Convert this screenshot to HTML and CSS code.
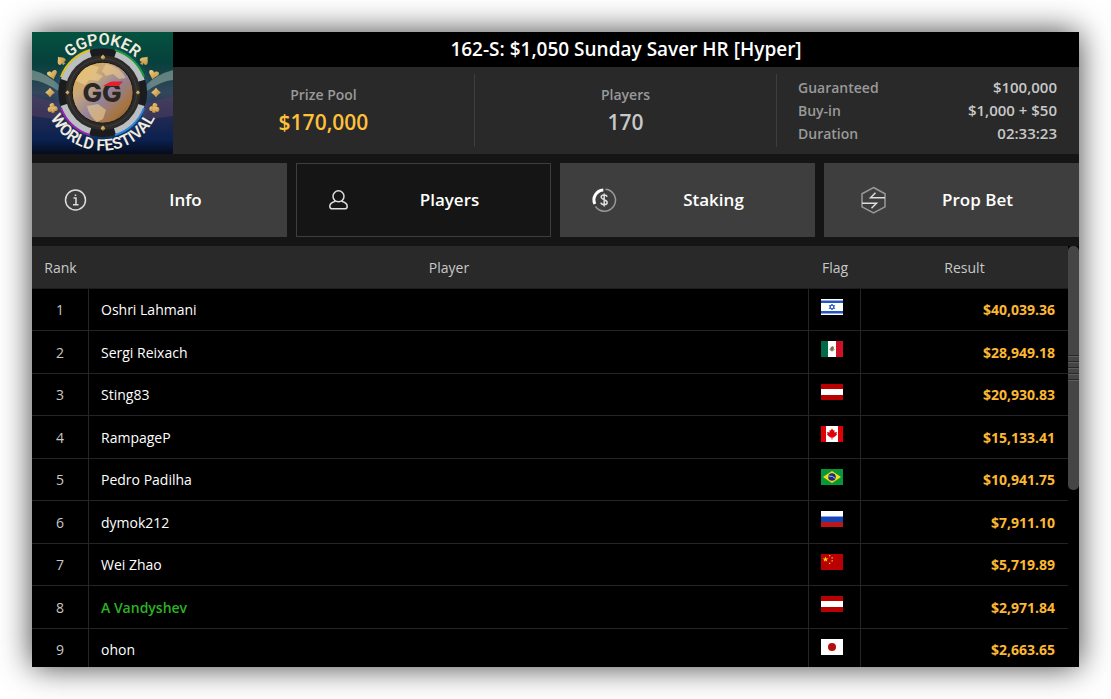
FILE: index.html
```html
<!DOCTYPE html>
<html lang="en">
<head>
  <meta charset="UTF-8" />
  <meta name="viewport" content="width=device-width, initial-scale=1.0" />
  <title>162-S: $1,050 Sunday Saver HR [Hyper]</title>
  <link rel="stylesheet" href="styles.css">
</head>
<body>
  <main class="lobby">
    <header class="header">
      <svg class="logo" viewBox="0 0 141 122" role="img" aria-label="GGPoker World Festival">
        <defs>
          <linearGradient id="sky" x1="0" y1="0" x2="0" y2="1">
            <stop offset="0" stop-color="#04523f" />
            <stop offset="0.25" stop-color="#07403c" />
            <stop offset="0.5" stop-color="#33475c" />
            <stop offset="0.65" stop-color="#252c52" />
            <stop offset="0.88" stop-color="#0b2150" />
            <stop offset="1" stop-color="#050b1c" />
          </linearGradient>
          <radialGradient id="light">
            <stop offset="0" stop-color="#dfe8d8" />
            <stop offset="1" stop-color="#6f8f88" stop-opacity="0" />
          </radialGradient>
          <radialGradient id="haze">
            <stop offset="0" stop-color="#3b8fc4" stop-opacity="0.9" />
            <stop offset="0.8" stop-color="#1a6a94" stop-opacity="0.5" />
            <stop offset="1" stop-color="#1a6a94" stop-opacity="0" />
          </radialGradient>
          <linearGradient id="globe" x1="0" y1="0" x2="1" y2="1">
            <stop offset="0" stop-color="#e0a63e" />
            <stop offset="0.3" stop-color="#c9a878" />
            <stop offset="0.55" stop-color="#94839c" />
            <stop offset="0.8" stop-color="#a8743c" />
            <stop offset="1" stop-color="#3c3a63" />
          </linearGradient>
          <linearGradient id="gold" x1="0" y1="0" x2="1" y2="1">
            <stop offset="0" stop-color="#f3d587" />
            <stop offset="1" stop-color="#b98533" />
          </linearGradient>
          <path id="arcTop" d="M22.700 60.700a48 48 0 0 1 96 0" />
          <path id="arcBottom" d="M12.700 60.700a58 58 0 0 0 116 0" />
          <path id="spade" d="M0-4.500C1-2.500 4-1 4 1.200 4 3 1.800 3.400.7 2.200L1.500 4.500H-1.500L-.7 2.200C-1.800 3.400-4 3-4 1.200-4-1-1-2.500 0-4.500z" />
          <path id="heart" d="M0 4.500C-1 2-4.800 0-4.800-2.200-4.800-4.800-1-4.800 0-2.300 1-4.800 4.800-4.800 4.800-2.200 4.800 0 1 2 0 4.500z" />
          <path id="diamond" d="M0-4.800Q2-2 4.800 0 2 2 0 4.800-2 2-4.800 0-2-2 0-4.800z" />
          <g id="club"><circle cy="-2.400" r="2.300" /><circle cx="-2.500" cy="1" r="2.300" /><circle cx="2.500" cy="1" r="2.300" /><path d="M-.8-1H.8L1.600 4.500H-1.600z" /></g>
        </defs>
        <rect width="141" height="122" fill="url(#sky)" />
        <path d="M0 38q16 4 28 16l-2 5Q12 49 0 48zM141 38q-16 4-28 16l2 5q14-10 26-11z" fill="#a9bfb4" opacity="0.5" />
        <path d="M0 64l30 8v16L0 84zM141 64l-30 8v16l30-4z" fill="#4e3e60" opacity="0.6" />
        <circle cx="70.700" cy="60.700" r="50" fill="url(#haze)" />
        <circle cx="70.700" cy="60.700" r="44.500" fill="#1c1c1e" />
        <!-- chip rim: light segments with coloured edges -->
        <circle cx="70.700" cy="60.700" r="40" fill="none" stroke="#bcbfc2" stroke-width="8" stroke-dasharray="38 24.830" stroke-dashoffset="-12.400" />
        <g fill="none" stroke-width="2">
          <path d="M29 45A44.500 44.500 0 0 1 58 18" stroke="#e2c51f" />
          <path d="M83 18a44.500 44.500 0 0 1 29 27" stroke="#1f9a35" />
          <path d="M29 76a44.500 44.500 0 0 0 29 27" stroke="#9a25b0" />
          <path d="M83 103a44.500 44.500 0 0 0 29-27" stroke="#2c83d8" />
        </g>
        <circle cx="70.700" cy="60.700" r="37.500" fill="#2c2b2a" />
        <circle cx="70.700" cy="60.700" r="34" fill="none" stroke="#403d39" stroke-width="1" />
        <circle cx="70.700" cy="60.700" r="30.500" fill="url(#globe)" stroke="#18130d" />
        <path d="M44 49q4-12 15-16l8 2-3 6 7 3-5 5-9-1-4 5zM74 32q13 2 20 14l-7 1-6-5-7 2-4-5zM55 74l11-2 8 6-3 9-6 3q-8-6-10-16z" fill="#f0cf8b" opacity="0.6" />
        <text class="logo-mark" x="70" y="70" text-anchor="middle">GG</text>
        <path d="M71 54l7-4q1-.6 3-.6h10l-4 4.600z" fill="#e3212c" />
        <g fill="url(#gold)">
          <use href="#spade" transform="translate(29 28.500) rotate(-40) scale(1.100)" />
          <use href="#heart" transform="translate(20.500 43) rotate(-15) scale(1.050)" />
          <use href="#diamond" transform="translate(18 60.500)" />
          <use href="#club" transform="translate(20.500 76) rotate(-10) scale(1.050)" />
          <use href="#spade" transform="translate(112.500 28.500) rotate(40) scale(1.100)" />
          <use href="#heart" transform="translate(121.500 43) rotate(15) scale(1.050)" />
          <use href="#diamond" transform="translate(124 60.500)" />
          <use href="#club" transform="translate(122.500 76) rotate(10) scale(1.050)" />
          <use href="#spade" transform="translate(71 25) scale(.55)" />
          <use href="#spade" transform="translate(71 96) scale(.55)" />
          <use href="#diamond" transform="translate(35.500 60.500) scale(.45)" />
          <use href="#diamond" transform="translate(106 60.500) scale(.45)" />
        </g>
        <text class="logo-text"><textPath href="#arcTop" startOffset="50%" text-anchor="middle">GGPOKER</textPath></text>
        <text class="logo-text"><textPath href="#arcBottom" startOffset="50%" text-anchor="middle">WORLD FESTIVAL</textPath></text>
      </svg>
      <div class="summary">
        <h1 class="title">162-S: $1,050 Sunday Saver HR [Hyper]</h1>
        <div class="stats">
          <div class="stat">
            <span class="stat-label">Prize Pool</span>
            <strong class="stat-value gold">$170,000</strong>
          </div>
          <div class="stat">
            <span class="stat-label">Players</span>
            <strong class="stat-value">170</strong>
          </div>
          <dl class="details">
            <dt>Guaranteed</dt><dd>$100,000</dd>
            <dt>Buy-in</dt><dd>$1,000 + $50</dd>
            <dt>Duration</dt><dd>02:33:23</dd>
          </dl>
        </div>
      </div>
    </header>

    <nav class="tabs">
      <button class="tab" type="button">
        <svg class="tab-icon" viewBox="0 0 36 28" aria-hidden="true">
          <circle cx="13.500" cy="14" r="10" />
          <path d="M11.500 12h2.500v6.500M11 18.700h5.500M13.500 8.500v1.600" />
        </svg>
        <span class="tab-label">Info</span>
      </button>
      <button class="tab active" type="button" aria-current="page">
        <svg class="tab-icon" viewBox="0 0 36 28" aria-hidden="true">
          <circle cx="12.500" cy="10.300" r="5.500" />
          <path d="M9.500 15.300C7 16 3.800 17 3.800 20.200c0 1.800 1 2.600 2.500 2.600h12.400c1.500 0 2.500-.8 2.500-2.600 0-3.200-3.200-4.200-5.700-4.900" />
        </svg>
        <span class="tab-label">Players</span>
      </button>
      <button class="tab" type="button">
        <svg class="tab-icon" viewBox="0 0 36 28" aria-hidden="true">
          <path class="thick" d="M4.800 18A10 10 0 0 1 13.300 4" />
          <path class="thin" d="M15.500 3.200A11 11 0 1 1 5.500 20.500" />
          <path d="M17 10.800c-.5-2.300-5.800-2.500-5.800.3 0 3 6 2.200 6 5.300 0 3-5.800 2.800-6.300.2M14.200 7.500v13" />
        </svg>
        <span class="tab-label">Staking</span>
      </button>
      <button class="tab" type="button">
        <svg class="tab-icon" viewBox="0 0 36 28" aria-hidden="true">
          <path class="thin" d="M19.500 1.500L31 7.800v13L19.500 27 8 20.800v-13z" />
          <path d="M31 11.700H16.500l5-5M8 17.300h14.500l-5 5" />
        </svg>
        <span class="tab-label">Prop Bet</span>
      </button>
    </nav>

    <section class="results">
      <div class="table-wrap">
        <table class="table">
          <thead>
            <tr><th class="rank">Rank</th><th>Player</th><th class="flag">Flag</th><th class="result">Result</th></tr>
          </thead>
          <tbody>
            <tr>
              <td class="rank">1</td><td>Oshri Lahmani</td>
              <td class="flag"><svg viewBox="0 0 22 16" role="img" aria-label="Israel"><path fill="#fff" d="M0 0h22v16H0z" /><path fill="#2455c3" d="M0 1.500h22v2.500H0zM0 12h22v2.500H0z" /><path fill="none" stroke="#3765cb" d="M11 5l2.700 4.500H8.300zM11 11L8.300 6.500h5.400z" /></svg></td>
              <td class="result">$40,039.36</td>
            </tr>
            <tr>
              <td class="rank">2</td><td>Sergi Reixach</td>
              <td class="flag"><svg viewBox="0 0 22 16" role="img" aria-label="Mexico"><path fill="#fff" d="M0 0h22v16H0z" /><path fill="#006b46" d="M0 0h7v16H0z" /><path fill="#d01027" d="M15 0h7v16h-7z" /><path fill="#8b6b3d" d="M10 6l2-1 1 2-1 3-2 0-1-2z" /><path fill="none" stroke="#78a17b" d="M8.500 8q2.500 4 5 0" /></svg></td>
              <td class="result">$28,949.18</td>
            </tr>
            <tr>
              <td class="rank">3</td><td>Sting83</td>
              <td class="flag"><svg viewBox="0 0 22 16" role="img" aria-label="Austria"><path fill="#b90000" d="M0 0h22v16H0z" /><path fill="#fff" d="M0 5h22v6H0z" /></svg></td>
              <td class="result">$20,930.83</td>
            </tr>
            <tr>
              <td class="rank">4</td><td>RampageP</td>
              <td class="flag"><svg viewBox="0 0 22 16" role="img" aria-label="Canada"><path fill="#fff" d="M0 0h22v16H0z" /><path fill="#df0008" d="M0 0h5v16H0zM17 0h5v16h-5zM11 2.500l1.300 2 1.200-.5-.2 2.500 2.700-.5-.6 2 .6.700-3.500 2.800H11.400V13.500H10.600V11.500H9.500L6 8.700l.6-.7-.6-2 2.700.5L8.500 4l1.200.5z" /></svg></td>
              <td class="result">$15,133.41</td>
            </tr>
            <tr>
              <td class="rank">5</td><td>Pedro Padilha</td>
              <td class="flag"><svg viewBox="0 0 22 16" role="img" aria-label="Brazil"><path fill="#079638" d="M0 0h22v16H0z" /><path fill="#f5df12" d="M11 2l9 6-9 6-9-6z" /><circle cx="11" cy="8" r="3.800" fill="#1b2c7c" /><path fill="none" stroke="#a9bdd4" d="M7.500 7q4-.5 7 2.500" /></svg></td>
              <td class="result">$10,941.75</td>
            </tr>
            <tr>
              <td class="rank">6</td><td>dymok212</td>
              <td class="flag"><svg viewBox="0 0 22 16" role="img" aria-label="Russia"><path fill="#fff" d="M0 0h22v6H0z" /><path fill="#1546b5" d="M0 5.500h22V11H0z" /><path fill="#bd1717" d="M0 11h22v5H0z" /></svg></td>
              <td class="result">$7,911.10</td>
            </tr>
            <tr>
              <td class="rank">7</td><td>Wei Zhao</td>
              <td class="flag"><svg viewBox="0 0 22 16" role="img" aria-label="China"><path fill="#ba0000" d="M0 0h22v16H0z" /><path fill="#ffd800" d="M4.500 2.500l.7 2h2.200L5.700 5.800l.6 2-1.800-1.200-1.800 1.200.6-2L1.600 4.500h2.200zM8 1h1.300v1.300H8zM10.500 3.200h1.300v1.300h-1.300zM10.500 6.200h1.300v1.300h-1.300zM8 8.700h1.300V10H8z" /></svg></td>
              <td class="result">$5,719.89</td>
            </tr>
            <tr class="highlight">
              <td class="rank">8</td><td>A Vandyshev</td>
              <td class="flag"><svg viewBox="0 0 22 16" role="img" aria-label="Austria"><path fill="#b90000" d="M0 0h22v16H0z" /><path fill="#fff" d="M0 5h22v6H0z" /></svg></td>
              <td class="result">$2,971.84</td>
            </tr>
            <tr>
              <td class="rank">9</td><td>ohon</td>
              <td class="flag"><svg viewBox="0 0 22 16" role="img" aria-label="Japan"><path fill="#fff" d="M0 0h22v16H0z" /><circle cx="11" cy="8" r="4" fill="#b50d0d" /></svg></td>
              <td class="result">$2,663.65</td>
            </tr>
          </tbody>
        </table>
      </div>
      <div class="scrollbar"><div class="thumb"><div class="grip"></div></div></div>
    </section>
  </main>
</body>
</html>
```

FILE: styles.css
```css
* {
  box-sizing: border-box;
}

body {
  margin: 0;
  padding: 32px;
  height: 100vh;
  background: #fff;
  font-family: 'Open Sans', sans-serif;
  font-size: 14px;
  color: #c8c8c8;
}

.lobby {
  display: flex;
  flex-direction: column;
  gap: 9px;
  height: 100%;
  background: #151515;
  box-shadow: 0 0 30px rgba(0, 0, 0, 0.75);
}

/* header */
.header {
  display: flex;
  background: #292929;
}

.logo {
  display: block;
  flex: none;
  width: 141px;
  height: 122px;
  overflow: visible;
}

.logo-text {
  font-family: Roboto, sans-serif;
  font-size: 16px;
  font-weight: 600;
  fill: #f1ecdf;
}

.logo-mark {
  font-family: Inter, sans-serif;
  font-size: 26px;
  font-weight: 800;
  fill: #2b2724;
}

.summary {
  display: flex;
  flex-direction: column;
  flex: 1;
}

.title {
  margin: 0;
  background: #000;
  color: #fff;
  font-size: 19px;
  font-weight: 600;
  line-height: 35px;
  text-align: center;
}

.stats {
  display: grid;
  grid-template-columns: repeat(3, 1fr);
  flex: 1;
  padding: 7px 0;
}

.stat {
  display: flex;
  flex-direction: column;
  align-items: center;
  padding-top: 12px;
  border-right: 1px solid #3d3d3d;
  font-weight: 600;
}

.stat-label {
  line-height: 18px;
  color: #999;
}

.stat-value {
  line-height: 36px;
  font-size: 21px;
  font-weight: 600;
}

.gold {
  color: #ffc13b;
}

.details {
  display: grid;
  grid-template-columns: auto auto;
  align-content: start;
  margin: 0;
  padding: 2px 22px 2px 21px;
  font-weight: 600;
  line-height: 23px;
}

.details dt {
  color: #999;
}

.details dd {
  margin: 0;
  font-size: 15px;
  text-align: right;
}

/* tabs */
.tabs {
  display: grid;
  grid-template-columns: repeat(4, 1fr);
  gap: 9px;
}

.tab {
  display: flex;
  align-items: center;
  height: 74px;
  padding: 0 13px 0 29px;
  border: 1px solid #3e3e3e;
  background: #3e3e3e;
  color: #fff;
  font-family: inherit;
  font-size: 17px;
  font-weight: 600;
  cursor: pointer;
}

.tab.active {
  background: #151515;
}

.tab-icon {
  flex: none;
  width: 36px;
  height: 28px;
  fill: none;
  stroke: #ddd;
  stroke-width: 1.5;
}

.tab-icon .thin {
  stroke: #999;
}

.tab-icon .thick {
  stroke: #fff;
  stroke-width: 3;
}

.tab-label {
  flex: 1;
  padding-bottom: 2px;
  text-align: center;
}

/* results */
.results {
  display: flex;
  flex: 1;
  min-height: 0;
  background: #000;
}

.table-wrap {
  flex: 1;
  overflow: hidden;
}

.table {
  width: 100%;
  table-layout: fixed;
  border-collapse: separate;
  border-spacing: 0;
}

th {
  height: 43px;
  padding: 0;
  border-bottom: 1px solid #1c1c1c;
  background: #292929;
  font-weight: 400;
  text-align: center;
}

td {
  height: 42px;
  padding: 0 12px;
  border-right: 1px solid #252525;
  border-bottom: 1px solid #252525;
  color: #fff;
  font-weight: 500;
}

tr:nth-child(even) td {
  height: 43px;
}

.rank {
  width: 57px;
}

td.rank {
  padding: 0;
  color: #c8c8c8;
  font-weight: 400;
  text-align: center;
}

.flag {
  width: 52px;
}

td.flag {
  padding: 0 5px 6px 0;
}

.flag svg {
  display: block;
  width: 22px;
  height: 16px;
  margin: 0 auto;
}

.result {
  width: 207px;
}

td.result {
  padding-right: 13px;
  border-right: 0;
  color: #fdb833;
  font-weight: 700;
  text-align: right;
}

.highlight td:nth-child(2) {
  color: #2bb324;
  font-weight: 600;
}

.scrollbar {
  width: 11px;
}

.thumb {
  display: flex;
  align-items: center;
  height: 58%;
  border-radius: 5px;
  background: #454545;
}

.grip {
  width: 100%;
  height: 27px;
  background: repeating-linear-gradient(#282828 0 1px, #5c5c5c 1px 2px, #454545 2px 6px);
}
```
